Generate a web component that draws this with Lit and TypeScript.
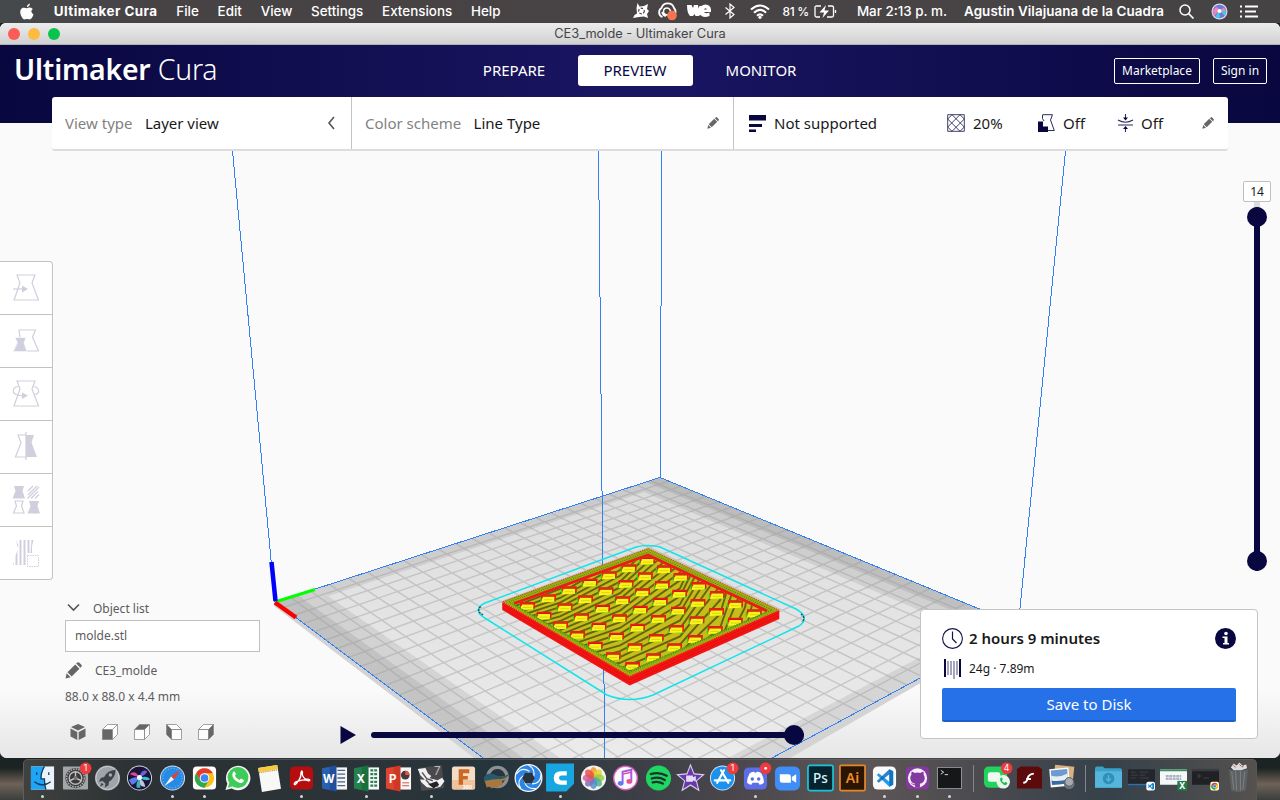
import { LitElement, html, svg, css } from "lit";
import { customElement } from "lit/decorators.js";

type Pt = [number, number];

/* Build plate corners on screen: left, back, right, front */
const PLATE: Pt[] = [[275, 602], [660, 477.5], [1018.3, 625], [604, 848.6]];

function projector(c: Pt[]) {
  const [[x0, y0], [x1, y1], [x2, y2], [x3, y3]] = c;
  const sx = x0 - x1 + x2 - x3, sy = y0 - y1 + y2 - y3;
  const dx1 = x1 - x2, dx2 = x3 - x2, dy1 = y1 - y2, dy2 = y3 - y2;
  const den = dx1 * dy2 - dx2 * dy1;
  const g = (sx * dy2 - dx2 * sy) / den, h = (dx1 * sy - sx * dy1) / den;
  return (u: number, v: number): Pt => {
    const w = 1 + g * u + h * v;
    return [
      ((x1 - x0 + g * x1) * u + (x3 - x0 + h * x3) * v + x0) / w,
      ((y1 - y0 + g * y1) * u + (y3 - y0 + h * y3) * v + y0) / w,
    ];
  };
}
const at = projector(PLATE);
const pts = (a: Pt[]) => a.map((p) => p[0].toFixed(1) + "," + p[1].toFixed(1)).join(" ");
const quad = (u0: number, v0: number, u1: number, v1: number) =>
  pts([at(u0, v0), at(u1, v0), at(u1, v1), at(u0, v1)]);

function gridPath(): string {
  let d = "";
  for (let k = 0; k < 23; k++) {
    const t = (7.5 + 10 * k) / 235;
    for (const [a, b] of [[at(t, 0), at(t, 1)], [at(0, t), at(1, t)]])
      d += `M${a[0].toFixed(1)} ${a[1].toFixed(1)}L${b[0].toFixed(1)} ${b[1].toFixed(1)}`;
  }
  return d;
}

/* Skin lines on the floor of the part, fanning out to the right */
function skinPath(): string {
  const xs = [505, 560, 620, 680, 720, 745, 768];
  const ps = [3.6, 4.6, 5.8, 8, 14, 26, 50];
  const n = [0, 4.6, 9.9, 15.7, 20.7, 24.1, 26.4];
  let d = "";
  for (let k = -16; k < 46; k++)
    d += "M" + xs.map((x, i) => `${x} ${(610 + (k - n[i]) * ps[i]).toFixed(1)}`).join("L");
  return d;
}

/* Centres of the raised blocks */
const BLOCKS: number[][] = [
  [262, 228, 325, 205, 387, 181, 449, 158, 507, 136, 566, 115, 622, 92],
  [311, 257, 374, 232, 436, 208, 497, 184, 557, 162, 615, 139, 672, 118],
  [361, 286, 424, 262, 487, 236, 547, 211, 607, 187, 666, 165, 722, 141],
  [412, 315, 476, 290, 538, 265, 600, 239, 660, 215, 718, 191, 776, 168],
  [465, 347, 529, 320, 592, 293, 655, 267, 714, 242, 773, 219, 831, 195],
  [519, 379, 584, 352, 648, 324, 709, 297, 770, 271, 829, 246, 886, 223],
  [577, 408, 640, 382, 703, 352, 765, 327, 825, 300, 885, 275, 942, 250],
];
const blocks = BLOCKS.flatMap((r) =>
  Array.from({ length: 7 }, (_, i): Pt => [440 + r[2 * i] / 3, 530 + r[2 * i + 1] / 3]));

const toolIcons = [
  svg`<path d="M17 12H35L32 20 38.500 37H14L20 20Z"/><path d="M13 26h10"/><path class="f" d="M22 22.500l6 3.500-6 3.500z"/>`,
  svg`<path d="M19 14H35.500L32.500 21 38.500 35H14L20 22Z"/><path class="f w" d="M15 21.500H26L24 27 27 35.500H13.500L17.500 27Z"/>`,
  svg`<path d="M17 12H35L32 20 38.500 37H14L20 20Z"/><path d="M18 17.500c-6 1-6.500 7-.5 8.500l6 .8M33.500 17.500c7 1.500 6.500 7.500.5 8"/><path class="f" d="M22 23.500l6 3-6 3.500z"/>`,
  svg`<path d="M26 13H18L21 20.500 15.500 35H26"/><path class="f" d="M26 13H34L31.500 20.500 37 35H26Z"/><path d="M26 10v28"/>`,
  svg`<path class="f" d="M14 11H24L22.500 16 25 23.500H12.500L15.500 16ZM29 26H39L37.500 31 40 38.500H27.500L30.500 31Z"/><path d="M15 26H23L21.500 31 24 38H13.500L16.500 31Z"/><path stroke-width="1.300" d="M28 16l5-5M28 20l9-9M27.500 23.500L39 12M31 23.500l7-7M35 23.500l4-4"/>`,
  svg`<path class="f" d="M16 12l2.500 6-1 1zM19.500 12h2v25H19.500zM23.500 12h2v25H23.500zM27.500 12h2v13H27.500zM31.500 12h2l-1.500 6v7h-1.500zM17.500 22v15h-2v-9zM13 36l1-2v3z"/><path stroke-width="1" stroke-dasharray="1.500 1" d="M27.500 27.500H38.500V38.500H27.500Z"/>`,
];

const pencil = (s: number) => html`<svg class="pencil" width=${s} height=${s} viewBox="0 0 16 16"><path d="M.5 15.500l1-5 3.800 3.800zM2.300 9.600L9.600 2.300l4 4-7.300 7.300zM10.500 1.500l1-1q1-.8 2 .1l1.900 1.900q.9 1 .1 2l-1 1z"/></svg>`;

const badge = (t: string) => svg`<circle cx="24.500" cy="4" r="6" fill="#ee3b3f"/><text x="24.500" y="7.200" font-size="9" fill="#fff" text-anchor="middle">${t}</text>`;
const wheel = (cols: string[], n: number) =>
  Array.from({ length: n }, (_, i) => svg`<ellipse cx="14" cy="8.300" rx="3.800" ry="5.600" fill=${cols[i]} opacity=".85" transform=${`rotate(${(i * 360) / n} 14 14)`}/>`);
const office = (c1: string, c2: string, t: string, lines: unknown) => svg`
  <path d="M14 3H27V26H14Z" fill="#f6f6f6"/>${lines}
  <path d="M1 4L16 1V28L1 25Z" fill=${c1}/><path d="M9 2.500L16 1V28L9 26.600Z" fill=${c2} opacity=".45"/>
  <text x="8" y="19" font-size="12" font-weight="700" fill="#fff" text-anchor="middle">${t}</text>`;
const chrome = (x: number, y: number, r: number) => svg`<g transform=${`translate(${x} ${y}) scale(${r / 10})`}>
  <circle r="10" fill="#fbc116"/><path d="M-8.700-5A10 10 0 0 1 8.700-5H0L-4.400 2.500Z" fill="#e33b2e"/>
  <path d="M-8.700-5A10 10 0 0 0 0 10L4.400 2.500H-4.400Z" fill="#2da94f"/><circle r="5" fill="#fff"/><circle r="4" fill="#4285f4"/></g>`;
const code = (x: number, y: number, s: number) => svg`<g transform=${`translate(${x} ${y}) scale(${s})`}>
  <path d="M5-9L9-7V7L5 9-8-3-6-5 5 4Z" fill="#1f9cf0"/><path d="M5-9L-8 3-6 5 5-4V9L9 7V-7Z" fill="#0b6fb8" opacity=".85"/></g>`;

interface App { art: unknown; run?: boolean }
const apps: App[] = [
  { run: true, art: svg`<path d="M2 2H26V26H2Z" fill="#e9f1fa"/><path d="M2 2H16Q12 9 13 15H16Q16 21 17.500 26H2Z" fill="#1ea5f5"/><path d="M8 8v3M20.500 8v3M5.500 18q8.500 6.500 17 0M16 2Q12 9 12.500 15H16Q16 21 17.500 26" fill="none" stroke="#12385e" stroke-width="1.300"/>` },
  { art: svg`<rect x="1" y="2" width="26" height="24" rx="1" fill="#a2a5aa"/><circle cx="14" cy="14" r="10.500" fill="#39393b"/><circle cx="14" cy="14" r="9.200" fill="none" stroke="#aaa" stroke-width="1.600" stroke-dasharray="1.700 1"/><circle cx="14" cy="14" r="6.500" fill="none" stroke="#b9b9b9" stroke-width="1.500"/><path d="M14 14V7M14 14l6.500 3M14 14l-6.500 3" stroke="#c5c5c5" stroke-width="1.500"/><circle cx="14" cy="14" r="2.200" fill="#777"/>${badge("1")}` },
  { art: svg`<circle cx="14" cy="14" r="13" fill="#9ea5aa"/><circle cx="14" cy="14" r="12" fill="none" stroke="#c8cdd0"/><path d="M22.500 5.500Q14 6 10.500 13L7 14l-2 4 4-1 3 3-1 4 4-2.500.5-3.500Q22 14 22.500 5.500ZM8 19l-2 4 4-2Z" fill="#3f4347"/><circle cx="17" cy="11" r="1.800" fill="#a7acb0"/>` },
  { art: svg`<circle cx="14" cy="14" r="13" fill="#d3d3dc"/><circle cx="14" cy="14" r="12" fill="#1c1438"/><path d="M4 10Q9 5 14 13 9 12 4 10Z" fill="#e0449a"/><path d="M14 13Q16 4 22 7 21 11 14 13Z" fill="#6f5ee0"/><path d="M3 16Q8 12 14 14 9 21 6 21Z" fill="#5a7fe6"/><path d="M14 14Q21 11 25 15 22 18 14 14Z" fill="#35c3cf"/><path d="M14 14Q19 17 20 23 13 24 14 14Z" fill="#e7f6ff" opacity=".8"/><path d="M14 14Q10 19 11 24L15 24Z" fill="#3bb3c4"/><circle cx="14" cy="13.500" r="2.600" fill="#f3fdff"/>` },
  { run: true, art: svg`<circle cx="14" cy="14" r="13" fill="#d9dde2"/><circle cx="14" cy="14" r="12" fill="#278be3"/><circle cx="14" cy="14" r="10" fill="none" stroke="#8cc9f7" stroke-dasharray="1 2"/><path d="M22.500 5.500L15.500 15.500 12.500 12.500Z" fill="#f13b32"/><path d="M5.500 22.500L12.500 12.500 15.500 15.500Z" fill="#f3f3f3"/>` },
  { run: true, art: svg`<rect x="2" y="2" width="24" height="24" rx="4" fill="#fff"/>${chrome(14, 14, 10)}` },
  { art: svg`<path d="M1.500 26.500L3.500 20A12.700 12.700 0 1 1 8 24.800Z" fill="#f4f4f4"/><circle cx="14.500" cy="13.500" r="10.800" fill="#3fcb58"/><path d="M4 24l1.500-5 3.500 3.500z" fill="#3fcb58"/><path d="M9 8.500c1-1.700 2-1.500 2.800 0s.5 2.100-.5 3.200q1.500 3 4.600 4.400c1.500-1.800 1.800-1.700 3.500-.7s1.500 1.500.4 2.800C17 21.500 6.500 15 9 8.500Z" fill="#fff"/>` },
  { art: svg`<g transform="rotate(-9 14 14)"><rect x="4" y="2" width="20" height="25" fill="#f8f8f6"/><path d="M4 2H24V6.500H4Z" fill="#f8c938"/><path d="M4 7H24" stroke="#9b8145" stroke-dasharray="1 1"/></g>` },
  { run: true, art: svg`<rect x="2" y="2" width="24" height="24" rx="4.500" fill="#b60d0e"/><path d="M6.500 20.500q-.5-2 4.500-3.500 3-5 2.500-9 1-2.500 1.500 0-1 4 3 7 4.500 0 4.500 1.300t-5.500-.3q-4 .6-6.500 1.300-3 4.500-4 3.200Z" fill="none" stroke="#fff" stroke-width="1.400"/>` },
  { art: office("#2a60b0", "#153f83", "W", svg`<path d="M17 6h8M17 10h8M17 14h8M17 18h8M17 22h8" stroke="#49638c" stroke-width="1.300"/>`) },
  { run: true, art: office("#26804b", "#0d5c31", "X", svg`<path d="M18 6h7M18 10h7M18 14h7M18 18h7M18 22h7" stroke="#2c8453" stroke-width="2.300" stroke-dasharray="3 1"/>`) },
  { art: office("#e0452f", "#b52a1c", "P", svg`<circle cx="21" cy="11" r="4.500" fill="#443b3a"/><path d="M21 11V6.500A4.500 4.500 0 0 1 25.500 11Z" fill="#e95540"/><path d="M18 19h7M18 22h7" stroke="#d65142"/>`) },
  { run: true, art: svg`<g transform="rotate(-7 14 14)"><rect x="2" y="2" width="24" height="24" fill="#4a4a4d"/><path d="M1 3l8 0 2 6 3 3-2 2 8 3 5-2 2 4-5 5-6 1-8-2-5-6-1-3 5 1-4-5Z" fill="#f0f0f0"/><path d="M5 7l4 7 6 3M8 15l4 6 8 2" stroke="#55555a" stroke-width="1.500" fill="none"/><path d="M10 20l9-2 2 4-6 3Z" fill="#232325"/></g><text x="20" y="10.500" font-size="12" fill="#bbb" text-anchor="middle">7</text>` },
  { art: svg`<rect x="2" y="2" width="24" height="24" rx="2.500" fill="#f5dcc6"/><path d="M2 16h24v8q0 2-2 2H4q-2 0-2-2Z" fill="#efc39d"/><path d="M9 5H20V9H13.500V12H18.500V15.500H13.500V21H9Z" fill="#c86a24"/><text x="18" y="25" font-size="5" fill="#fff" font-weight="700" text-anchor="middle">360</text>` },
  { art: svg`<circle cx="15" cy="13" r="10" fill="none" stroke="#8c8f93" stroke-width="3.500"/><path d="M1 15q5-7 11-4 6 4 15-1-3 6-7 7v5q-4-1-5 3-3-3-6 0-2-3-5-1Z" fill="#a5783f"/><path d="M1 13q5-6 12-2t15-2q-4 6-11 6T1 17Z" fill="#24596e"/>` },
  { art: svg`<circle cx="14" cy="14" r="14.500" fill="#f4f8fc"/><circle cx="14" cy="14" r="9.500" fill="none" stroke="#2c84e4" stroke-width="7.500"/><path d="M14 .5Q22 5 19 14M27 10Q27 20 17.500 20M22 25Q12 26 10 18M6 25Q1 17 8.500 12M1.500 10Q7 2 15 7" stroke="#f4f8fc" stroke-width="1.300" fill="none"/><path d="M10.500 8.500h7l3 5.500-3 5.500h-7L7.500 14Z" fill="#27343e"/>` },
  { run: true, art: svg`<path d="M-1-1H28V20L20 28H-1Z" fill="#17a6df"/><path d="M20.500 7H14.500Q7 7 7 14t7.500 7h6V16.500H15Q12.500 16.500 12.500 14T15 11.500h5.500Z" fill="#fff"/>` },
  { art: svg`<circle cx="14" cy="14" r="13" fill="#f4f3f0"/>${wheel(["#f19a2d", "#ead02a", "#9ccb3e", "#50b489", "#4c91cf", "#8b6bb5", "#cf609b", "#e8504a"], 8)}` },
  { art: svg`<circle cx="14" cy="14" r="13" fill="#d75fb4"/><circle cx="14" cy="14" r="11.500" fill="#fbf9ff"/><path d="M11 19V7.500l9-2V17" fill="none" stroke="#a45ae8" stroke-width="2"/><path d="M11 10l9-2" stroke="#e14f9d" stroke-width="1.500"/><ellipse cx="9" cy="19.500" rx="3" ry="2.500" fill="#5b7ff0"/><ellipse cx="18" cy="17.500" rx="3" ry="2.500" fill="#e85195"/>` },
  { art: svg`<circle cx="14" cy="14" r="13" fill="#1fd663"/><path d="M6 10q8.500-2.800 16.500 1.700M7 14.500q7-2.200 13.500 1.500M8 18.500q5.500-1.600 10.500 1.300" stroke="#17352a" stroke-width="2.400" stroke-linecap="round" fill="none"/>` },
  { art: svg`<path d="M14-1L18 9 29 10 20.700 17 23.500 28 14 22 4.500 28 7.300 17-1 10 10 9Z" fill="#d8d0e8"/><path d="M14 2L17.300 10.400 26 11.200 19.500 16.800 21.700 25.500 14 20.600 6.300 25.500 8.500 16.800 2 11.200 10.700 10.400Z" fill="#6a38ae"/><path d="M9.500 11.500h7v1.800l3-1.500v6l-3-1.500V18h-7Z" fill="#e6dcf6"/>` },
  { art: svg`<circle cx="14" cy="14" r="13" fill="#d4e5f2"/><circle cx="14" cy="14" r="12" fill="#1c91ee"/><path d="M15.500 6L8.500 19M12.500 6l7.500 13M6 16.500H22" stroke="#fff" stroke-width="2.200" stroke-linecap="round"/>${badge("1")}` },
  { run: true, art: svg`<rect x="2" y="3" width="24" height="23" rx="5" fill="#5b6ee5"/><path d="M8 9q2.500-1.500 4.500-1.500l1 1h1l1-1Q18 7.500 20 9q3 5 2.700 10-2 2-4.500 2l-1.200-2h-6L9.800 21q-2.500 0-4.500-2Q5 14 8 9Z" fill="#fff"/><circle cx="10.700" cy="15" r="1.800" fill="#5b6ee5"/><circle cx="17.300" cy="15" r="1.800" fill="#5b6ee5"/>${badge("•")}` },
  { art: svg`<rect x="1" y="2" width="26" height="25" rx="6" fill="#408df5"/><path d="M6 10h9q2.500 0 2.500 2.500V19H8.500Q6 19 6 16.500ZM18.500 13L23 10v9l-4.500-3Z" fill="#fff"/>` },
  { art: svg`<rect x="1" y="1" width="26" height="26" rx="2" fill="#06242f" stroke="#1cc3d8" stroke-width="1.800"/><text x="14" y="19" font-size="14" font-weight="500" fill="#d9f4fb" text-anchor="middle" font-family="Noto Sans">Ps</text>` },
  { art: svg`<rect x="1" y="1" width="26" height="26" rx="1" fill="#2b1604" stroke="#e6862d" stroke-width="1.800"/><text x="14" y="19.500" font-size="14.500" font-weight="600" fill="#f18b27" text-anchor="middle" font-family="Noto Sans">Ai</text>` },
  { run: true, art: svg`<rect x="2" y="2" width="24" height="24" rx="5" fill="#fbfbfb"/>${code(14, 14, 1)}` },
  { run: true, art: svg`<rect x="2" y="2" width="24" height="24" rx="5" fill="#83399e"/><circle cx="14" cy="14" r="10" fill="#f5f0f8"/><path d="M11.500 24v-4q-5-1-5-6 0-2 1.200-3.500-.4-2 .3-3 1.500 0 3 1.200 3-.7 6 0 1.500-1.200 3-1.200.7 1 .3 3Q21.500 12 21.500 14q0 5-5 6v4Z" fill="#83399e"/><path d="M12 21q-3 .8-4.500-2" stroke="#83399e" fill="none"/>` },
  { run: true, art: svg`<rect x="1" y="2.500" width="26" height="23" rx="1" fill="#9a9a9a"/><rect x="2" y="3.500" width="24" height="21" fill="#161718"/><path d="M5 6l3 2-3 2M9 10.500h3.500" stroke="#ddd" fill="none"/>` },
];
const recents: App[] = [
  { art: svg`<rect x="1" y="2" width="24" height="22" rx="5" fill="#20d35c"/><rect x="5" y="8" width="13" height="10" rx="2.500" fill="#eefaf0"/><circle cx="21" cy="18" r="7" fill="#e9f6ec"/><path transform="translate(21.500 18) scale(.9)" d="M-4-4c1-1.500 2-1 2.500.3s.2 1.500-.7 2.300q1 1.800 3 2.600c1-1 1.200-1.200 2.500-.4s1 1.500-.3 2.500Q1 5-2.500 1-5-2-4-4Z" fill="#1eb751"/>${badge("4")}` },
  { art: svg`<path d="M1 5l4-3H23l4 3V25H1Z" fill="#5c0a0c"/><path d="M4 18q3.500 0 4.500-4.500T15 8.500M7 14h5" transform="translate(3.500 1)" fill="none" stroke="#fff" stroke-width="2"/>` },
  { art: svg`<rect x="6" y="1" width="20" height="17" fill="#d9b184" transform="rotate(6 14 14)"/><rect x="2" y="4" width="20" height="19" fill="#fbfbfb" transform="rotate(-5 12 13)"/><g transform="rotate(-5 12 13)"><rect x="3.500" y="5.500" width="17" height="15" fill="#6c9bd2"/><path d="M3.500 11q8 3 17-1v10.500h-17Z" fill="#e7eef2"/><path d="M3.500 16q9 2 17 0v4.500h-17Z" fill="#3a6ba0"/></g><circle cx="22" cy="20" r="5.500" fill="#70757b"/><circle cx="22" cy="18" r="4.500" fill="#a6abb0" stroke="#5a5e62"/>` },
];
const stacks: App[] = [
  { art: svg`<path d="M0 4q0-2 2-2h6l2 2H26q2 0 2 2V24H0Z" fill="#3aa0ca"/><path d="M0 7H28V24H0Z" fill="#55b5da"/><circle cx="14" cy="14.500" r="6" fill="#2f8fb8"/><path d="M14 11v6m-2.500-2.500L14 17l2.500-2.500" stroke="#55b5da" stroke-width="1.500" fill="none"/>` },
  { art: svg`<rect x="0" y="5" width="28" height="16" fill="#23262b"/><path d="M3 8h5M3 11h7M3 14h5M12 8h9M12 11h6M12 14h10" stroke="#3f434a"/><path d="M0 20h28v1.500H0z" fill="#2472b8"/><rect x="19" y="18" width="9" height="9" rx="2" fill="#fff"/>${code(23.500, 22.500, 0.38)}` },
  { art: svg`<rect x="0" y="5" width="28" height="16" fill="#f6f8f7"/><path d="M0 5h28v2H0z" fill="#3b8d61"/><path d="M6 12h16M6 15h16" stroke="#a9b4c5" stroke-width="2.300" stroke-dasharray="3 .6"/><rect x="18" y="17" width="10" height="10" fill="#237a47"/><text x="23" y="25.500" font-size="9" font-weight="700" fill="#fff" text-anchor="middle">X</text>` },
  { art: svg`<rect x="0" y="5" width="28" height="16" fill="#202124"/><path d="M0 5h28v1.500H0zM6 10l3 2-3 2M12 14h6" fill="#35373c" stroke="#3d4045"/><rect x="19" y="18" width="9" height="9" rx="2" fill="#fff"/>${chrome(23.500, 22.500, 3.6)}` },
  { art: svg`<path d="M4 4H24L21.500 27Q14 30 6.500 27Z" fill="#5e6163"/><path d="M7 7l2 19M11 7l1 20M16 7v20M20.500 7l-2 19" stroke="#8d9092" opacity=".7"/><ellipse cx="14" cy="4" rx="10" ry="2.500" fill="#3e4244"/><path d="M6 3l3-4 3 2 3-3 3 3 4-1 1 4-6 2-8 0Z" fill="#dadcdd"/><path d="M9 1l2 2M15 0l2 2M19 1l-1 2" stroke="#b2443e"/>` },
];

@customElement("app-root")
export class AppRoot extends LitElement {
  static styles = css`
    :host { display: block; width: 1280px; height: 800px; overflow: hidden; background: linear-gradient(90deg, #23292600 2%, #273038 10%, #4c4c4b 90%, #4b4a4800 98%), linear-gradient(#1b2422 96%, #6f6259 98%, #3a3f3c); font-family: "Noto Sans", sans-serif; }
    * { box-sizing: border-box; }
    svg { display: block; overflow: visible; flex: none; }
    span { white-space: nowrap; }
    .menubar { height: 23px; display: flex; align-items: center; background: linear-gradient(90deg, #45494b, #474345 12%, #484446 70%, #454344); color: #fff; font: 500 13.400px Inter, sans-serif; padding: 0 22px 1px 20px; gap: 18.800px; }
    .menubar .app { font-weight: 700; margin-left: 1px; letter-spacing: .44px; }
    .menubar .status { margin-left: auto; display: flex; align-items: center; }
    .m8 { margin-right: 8px; } .m10 { margin-right: 10px; } .m12 { margin-right: 12px; } .m14 { margin-right: 14px; }
    .m15 { margin-right: 15px; } .m17 { margin-right: 17px; } .m20 { margin-right: 20px; }
    .pct { font-size: 12px; letter-spacing: -.3px; margin-right: 5px; }
    .user { font-weight: 600; letter-spacing: .08px; margin-right: 15px; }
    .window { height: 735px; border-radius: 6px 6px 7px 7px; overflow: hidden; background: #fafafa; }
    .titlebar { height: 22px; display: flex; align-items: center; padding: 0 8px; background: linear-gradient(#ececec, #d1d1d1); border-bottom: 1px solid #b2b2b2; font: 400 12.800px Inter, sans-serif; color: #454545; }
    .lights { display: flex; gap: 8px; width: 100px; }
    .light { width: 12px; height: 12px; border-radius: 50%; }
    .r { background: #fc5b57; } .y { background: #fdbc40; } .g { background: #0ac44f; }
    .titlebar .t { flex: 1; text-align: center; padding-right: 100px; }
    .body { position: relative; height: 713px; display: flex; flex-direction: column; }
    .scene { position: absolute; inset: 0; }
    .head { position: relative; height: 78px; padding: 0 13px 26px 14px; display: grid; grid-template-columns: 1fr auto 1fr; align-items: center; background: linear-gradient(90deg, #08073f, #191561 48%, #191561 52%, #08073f); color: #fff; }
    .logo { font-size: 28.400px; font-weight: 600; line-height: 48px; letter-spacing: -.2px; padding-bottom: 4px; }
    .logo i { font-style: normal; font-weight: 300; }
    .tabs { display: flex; align-items: center; font-size: 15px; margin-left: -6px; padding-bottom: 1px; }
    .tab { width: 115px; height: 31px; line-height: 31px; text-align: center; border-radius: 3px; }
    .tab.mid { background: #fff; color: #08073f; margin: 0 11px 0 6px; }
    .acts { display: flex; justify-content: flex-end; gap: 13px; padding-bottom: 1px; }
    .act { border: 1px solid #fff; border-radius: 2px; font-size: 12px; height: 26px; line-height: 24px; width: 54px; text-align: center; }
    .act.wide { width: 86px; }
    .bar { position: relative; margin: -26px 52px 0; height: 54px; display: flex; border-radius: 3px; background: #fff; border-bottom: 2px solid #dcdcdc; font-size: 15px; color: #191919; }
    .cell { display: flex; align-items: center; padding: 0 14px 0 13px; border-left: 1px solid #c4c4c4; }
    .cell:first-child { border: 0; padding-right: 15px; }
    .c1 { width: 299px; } .c2 { width: 382px; } .c3 { width: 495px; }
    .dim { color: #828282; margin-right: 12.400px; }
    .lead { margin: 0 7px 0 2px; }
    .quality { width: 173px; } .infill { width: 65px; } .support { width: 55px; }
    .push { margin-left: auto; }
    .pencil { fill: #666; }
    .work { position: relative; flex: 1; display: grid; grid-template-columns: 340px 1fr 360px; }
    .left { display: flex; flex-direction: column; }
    .tools { margin-top: 110px; width: 53px; height: 319px; border: 1px solid #c2c2c2; border-left: 0; border-radius: 0 4px 4px 0; background: #fff; }
    .tool { height: 53px; border-bottom: 1px solid #c2c2c2; padding-top: 1px; }
    .tool:last-child { border: 0; }
    .tool svg { fill: none; stroke: #d0cfdd; stroke-width: 1.200; }
    .tool .f { fill: #d0cfdd; stroke: none; }
    .tool .w { stroke: #fff; stroke-width: .6; }
    .objects { padding: 19px 0 0 65px; font-size: 12px; color: #5c5c5c; }
    .row { display: flex; align-items: center; }
    .olist { height: 21px; gap: 12px; padding-bottom: 3px; }
    .file { width: 195px; height: 32px; border: 1px solid #c0c0c0; background: #fff; line-height: 30px; padding-left: 9px; }
    .name { height: 37px; gap: 13px; }
    .dims { line-height: 16px; }
    .cubes { display: flex; gap: 16px; margin: 19px 0 0 5px; }
    .cubes svg { stroke: #8a8a8a; stroke-width: .8; fill: #fdfdfd; }
    .cubes .k { fill: #666; }
    .center { display: flex; align-items: flex-end; padding-bottom: 13px; }
    .path { display: flex; align-items: center; height: 20px; }
    .track { width: 432.500px; height: 6px; border-radius: 3px; background: #08073f; margin-left: 15px; display: flex; align-items: center; justify-content: flex-end; }
    .knob { width: 20px; height: 20px; border-radius: 50%; background: #08073f; flex: none; }
    .right { display: flex; flex-direction: column; }
    .layers { align-self: flex-end; width: 28px; height: 391px; margin: 30px 9px 0 0; display: flex; flex-direction: column; align-items: center; }
    .num { width: 28px; height: 21px; background: #fff; border: 1px solid #c0c0c0; border-radius: 2px; font-size: 12px; line-height: 19px; text-align: center; color: #191919; }
    .stem { width: 6px; height: 6px; background: #dcdcdc; }
    .rail { width: 6px; height: 363.500px; background: #08073f; display: flex; flex-direction: column; align-items: center; justify-content: space-between; border-radius: 9px; margin-top: -1px; }
    .card { margin: 37px 22px 0 0; width: 338px; height: 130px; background: #fff; border: 1px solid #c4c4c4; border-radius: 4px; padding: 17px 21px; color: #191919; }
    .time { height: 23px; font-size: 15px; font-weight: 600; gap: 6px; }
    .time span { padding-bottom: 2px; }
    .mat { height: 38px; font-size: 12px; gap: 7px; padding: 0 0 1px 1px; }
    .save { height: 34px; border-radius: 2px; background: #2670e8; border-bottom: 2px solid #1d5fc9; color: #fff; font-size: 15px; line-height: 33px; text-align: center; }
    .dock { margin: 1px 23px 0 23px; height: 41px; display: flex; padding: 4px 1px 0 2.500px; border: 1px solid #6a6a6a88; border-bottom: 0; border-radius: 5px 5px 0 0; background: linear-gradient(90deg, #40413f, #2b3134 9%, #2b3439 30%, #25343c 38%, #4b474c 58%, #5d5656 68%, #4a4a4f 78%, #35414a 88%, #55514f); font-family: Inter, sans-serif; }
    .icon { width: 32.400px; flex: none; display: flex; flex-direction: column; align-items: center; }
    .icon svg { width: 27px; height: 28px; }
    .dot { width: 3px; height: 3px; border-radius: 50%; background: #d6d6d6; margin-top: 3px; }
    .sep { width: 14.800px; flex: none; padding: 1px 6.500px 0 7.500px; }
    .sep::before { content: ""; display: block; width: 1px; height: 27px; background: #87858a; }
  `;

  private scene() {
    const [L, B, R] = PLATE;
    const floor = "514,604.500 648,556.500 766,612 630,671";
    return html`<svg class="scene" width="1280" height="713" viewBox="0 45 1280 713">
      <defs>
        <linearGradient id="fade" x2="0" y2="1"><stop offset="0" stop-color="#e6e6e6" stop-opacity="0"/><stop offset="1" stop-color="#e6e6e6"/></linearGradient>
        <linearGradient id="plate" x2="0" y2="1"><stop offset="0" stop-color="#dcdcdc"/><stop offset=".75" stop-color="#ebebeb"/></linearGradient>
        <clipPath id="fl"><polygon points=${floor}/></clipPath>
      </defs>
      <rect x="0" y="690" width="1280" height="68" fill="url(#fade)"/>
      <polygon fill="#d3d3d3" points="274,602 660,482 1018,627 604,865 473,757 274,606"/>
      <polygon fill="url(#plate)" points=${pts(PLATE)}/>
      <g fill="#000" fill-opacity=".08">
        <polygon points=${quad(0, 0, 0.09, 1)}/><polygon points=${quad(0, 0, 0.047, 1)}/>
        <polygon points=${quad(0.91, 0, 1, 1)}/><polygon points=${quad(0.955, 0, 1, 1)}/>
        <polygon points=${quad(0.09, 0, 0.91, 0.045)}/><polygon points=${quad(0.09, 0.955, 0.91, 1)}/>
      </g>
      <path d=${gridPath()} stroke="#9c9c9c" stroke-opacity=".42" stroke-width="1.400"/>
      <g stroke="#3380f2" stroke-width="1" fill="none">
        <polygon points=${pts(PLATE)} shape-rendering="crispEdges"/>
        <path shape-rendering="crispEdges" d="M232.500 151L${L[0]} ${L[1]}M661.500 151L660.500 ${B[1]}M1065.500 151L${R[0]} ${R[1]}M598.500 151L604.800 760"/>
      </g>
      <path d="M275 602L315 589.500" stroke="#00ff00" stroke-width="3"/>
      <path d="M271.500 562L275.500 601" stroke="#0000fb" stroke-width="4.500"/>
      <path d="M275 602.500L296 617.500" stroke="#fb0000" stroke-width="4.500"/>
      <path d="M636 547Q648 544 660 547L796 609Q811 617.500 799 626L653 695Q630 704 607 695L484 617.500Q472 609.500 485 603Z" fill="none" stroke="#10e4ea" stroke-width="1.500"/>
      <path d="M483 615l-4-3q-1-3 2-6M801 614q5 4 1 8" stroke="#0b5256" fill="none" stroke-width="1.300" stroke-dasharray="2 1"/>
      <polygon fill="#f41414" points="502.300,601.700 629.700,675 779.300,610 779.300,619 629.700,685.500 502.300,610"/>
      <path d="M502 604.500L629.700 679.500 779 613M502 607.500L629.700 682.500 779 616" stroke="#d90f0f" stroke-width=".7" fill="none"/>
      <polygon fill="#b5ae12" points="502.300,601.700 648.300,548.300 779.300,610 629.700,676.500"/>
      <g fill="none" stroke-width="1" stroke-dasharray="1 1">
        <polygon stroke="#e02a10" points="503,601.700 648.300,548.600 778.500,610 629.700,676"/>
        <polygon stroke="#22c51a" points="506,601.700 648.300,550 775,610 629.700,674"/>
        <polygon stroke="#5f6a08" points="509,602 648.300,551.800 772,610 629.700,672.500"/>
        <polygon stroke="#22c51a" points="512,602.500 648.300,553 769,610 629.700,671.500"/>
      </g>
      <g clip-path="url(#fl)">
        <polygon fill="#c4bd1a" points=${floor}/>
        <path d=${skinPath()} fill="none" stroke="#4e4c0a" stroke-width="1.900" stroke-opacity=".8"/>
        ${blocks.map(([x, y]) => svg`<g transform=${`translate(${x.toFixed(1)} ${y.toFixed(1)}) scale(1.08)`}>
          <path d="M-7.500 3.500V-1L-5-3.500H7V3.500Z" fill="#2fd01d"/>
          <path d="M-6.500 2.500V-2.500H6.500V2.500Z" fill="#c51810"/>
          <path d="M-6.500 3.800L-5.500-1.500H6L5.500 3.300Z" fill="#fdf41a"/>
          <path d="M-5.800 0V-3H6.500V2" fill="none" stroke="#f01a12" stroke-width="1.300"/>
          <path d="M-4 1.300h8" stroke="#d0c80e" stroke-width=".7"/>
        </g>`)}
      </g>
      <path d="M514 603.500L648 555 767 611" fill="none" stroke="#f01818" stroke-width="2.800"/>
      <path d="M514 604.500L629.700 671 767 612" fill="none" stroke="#36a814" stroke-width="1" stroke-dasharray="2 1"/>
    </svg>`;
  }

  private status() {
    return html`<div class="status">
      <svg class="m8" width="16" height="16" viewBox="0 0 16 16"><path d="M4.500 0l2 3.500L11 3l4-2-1 5 2 2-2 3 1 4-4-1.500-5 .5L0 15l1.500-3L4 10.500 3.500 5Z" fill="#fff"/><circle cx="8.500" cy="8" r="2.800" fill="none" stroke="#474345" stroke-width="1.200" stroke-dasharray="2.500 1.500"/></svg>
      <svg class="m10" width="20" height="17" viewBox="0 0 20 17"><path d="M5.500 14A5 5 0 0 1 4.500 5 6.500 6.500 0 0 1 17 5q2 2 1.500 5" fill="none" stroke="#fff" stroke-width="1.800"/><path d="M11 12q-4.500 0-4.500-3.500T10 5q2.500 0 3.500 3T17 9M5 9q1 4 4 4" fill="none" stroke="#fff" stroke-width="1.500"/><circle cx="15" cy="12.500" r="4.800" fill="#fb7452"/></svg>
      <svg class="m14" width="24" height="14" viewBox="0 0 24 14"><path d="M0 1h4.500l1.500 3 1-3h4l.5 3.500L12.500 2h2Q16 .5 18.500.5q5 .5 5.500 5V8H17q1 2 5.500.5V12q-6 2.500-9-1L11.500 12H8.500L7.500 10 6 12H3Q0 9 0 1ZM17 5.500h3q-1.500-2.500-3 0Z" fill="#fff"/></svg>
      <svg class="m15" width="10" height="16" viewBox="0 0 10 16"><path d="M.5 4.500l8.500 7L5 15V1l4 3.500-8.500 7" fill="none" stroke="#fff" stroke-width="1.200"/></svg>
      <svg class="m12" width="20" height="15" viewBox="0 0 20 15"><path d="M1 5.500Q10-2.500 19 5.500M4 8.700Q10 3 16 8.700M7 11.700Q10 9 13 11.700" fill="none" stroke="#fff" stroke-width="2.100"/><circle cx="10" cy="13.300" r="1.600" fill="#fff"/></svg>
      <span class="pct">81 %</span>
      <svg class="m20" width="23" height="13" viewBox="0 0 23 13"><path d="M7 1H2.500Q1 1 1 2.500v8Q1 12 2.500 12H6M14 1h4q1.500 0 1.500 1.500v8q0 1.500-1.500 1.500h-5M21.500 5v3" fill="none" stroke="#fff" stroke-width="1.300"/><path d="M12 0L5.500 7.500H10L8.500 13 15 5.500H10.500Z" fill="#fff"/></svg>
      <span class="m17">Mar 2:13 p. m.</span>
      <span class="user">Agustin Vilajuana de la Cuadra</span>
      <svg class="m17" width="15" height="15" viewBox="0 0 15 15"><circle cx="6" cy="6" r="5" fill="none" stroke="#fff" stroke-width="1.500"/><path d="M9.500 9.500l5 5" stroke="#fff" stroke-width="1.700"/></svg>
      <svg class="m12" width="17" height="17" viewBox="0 0 17 17"><circle cx="8.500" cy="8.500" r="8" fill="#d9d9ee"/><circle cx="8.500" cy="8.500" r="6.800" fill="#6e78d8"/><path d="M2 7q5-6 6 1l-5 5zM9 8q4-6 6 0l-3 1z" fill="#f184b4"/><path d="M8 8l-4 6q4 2 5 0zM9 8l5 5q2-3 1-5z" fill="#46c9e4"/><circle cx="8.500" cy="8" r="2" fill="#fff"/></svg>
      <svg width="18" height="13" viewBox="0 0 18 13"><path d="M0 1.500h2M0 6.500h2M0 11.500h2M5 1.500h13M5 6.500h11M5 11.500h13" stroke="#fff" stroke-width="1.800"/></svg>
    </div>`;
  }

  private icon = (a: App) => html`<div class="icon"><svg viewBox="0 0 28 28">${a.art}</svg>${a.run ? html`<div class="dot"></div>` : ""}</div>`;

  render() {
    return html`
      <div class="menubar">
        <svg width="14" height="17" viewBox="0 0 14 17"><path d="M9.800.5Q10 3 7 4.300 6.700 1.800 9.800.5ZM7 5.200q3-1.700 5.800.8-3.300 2.200.7 5.500Q11.500 17 9 16.300q-2-.8-4 0Q3 17 1 12.500-1.300 6.500 3 4.800q1.500-.4 4 .4Z" fill="#fff"/></svg>
        <span class="app">Ultimaker Cura</span><span>File</span><span>Edit</span><span>View</span><span>Settings</span><span>Extensions</span><span>Help</span>
        ${this.status()}
      </div>
      <div class="window">
        <div class="titlebar"><div class="lights"><div class="light r"></div><div class="light y"></div><div class="light g"></div></div><span class="t">CE3_molde - Ultimaker Cura</span></div>
        <div class="body">
          ${this.scene()}
          <div class="head">
            <span class="logo">Ultimaker <i>Cura</i></span>
            <div class="tabs"><span class="tab">PREPARE</span><span class="tab mid">PREVIEW</span><span class="tab">MONITOR</span></div>
            <div class="acts"><span class="act wide">Marketplace</span><span class="act">Sign in</span></div>
          </div>
          <div class="bar">
            <div class="cell c1"><span class="dim">View type</span><span>Layer view</span>
              <svg class="push" width="9" height="14" viewBox="0 0 9 14"><path d="M7 1L2 7l5 6" fill="none" stroke="#555" stroke-width="1.600"/></svg></div>
            <div class="cell c2"><span class="dim">Color scheme</span><span>Line Type</span><span class="push">${pencil(12)}</span></div>
            <div class="cell c3">
              <svg class="lead" width="18" height="18" viewBox="0 0 18 18"><path d="M0 1h17v5.500H0zM0 10h13v3H0zM0 15.500h7V18H0z" fill="#08073f"/></svg><span class="quality">Not supported</span>
              <svg class="m8" width="18" height="18" viewBox="0 0 18 18"><path d="M.7.700H17.300V17.300H.7ZM.7 5L5 .7M.7 13L13 .7M5 17.300L17.300 5M13 17.300l4.300-4.300M5 .7L17.300 13M13 .7L17.300 5M.7 5L13 17.300M.7 13L5 17.300" fill="none" stroke="#2d2b5e" stroke-width=".9"/></svg><span class="infill">20%</span>
              <svg class="m8" width="17" height="18" viewBox="0 0 17 18"><path d="M4.500.7H14.500L12.500 6 16.300 16.500H8" fill="none" stroke="#2d2b5e"/><path d="M4.500 1v3.500L6 7" fill="none" stroke="#2d2b5e"/><path d="M0 7.500h5v5h5V18H0Z" fill="#08073f"/></svg><span class="support">Off</span>
              <svg class="m8" width="15" height="18" viewBox="0 0 15 18"><path d="M0 6Q7.500 10.500 15 6M0 11h15M7.500 0v4M7.500 14v4" fill="none" stroke="#2d2b5e" stroke-width="1.100"/><path d="M5 3.500h5L7.500 6.500zM5 15h5L7.500 12z" fill="#08073f"/></svg><span>Off</span>
              <span class="push">${pencil(12)}</span>
            </div>
          </div>
          <div class="work">
            <div class="left">
              <div class="tools">${toolIcons.map((t) => html`<div class="tool"><svg width="52" height="52" viewBox="0 0 52 52">${t}</svg></div>`)}</div>
              <div class="objects">
                <div class="row olist"><svg width="16" height="10" viewBox="0 0 16 10"><path d="M3 1.500l5.500 5.500L14 1.500" fill="none" stroke="#555" stroke-width="1.600"/></svg><span>Object list</span></div>
                <div class="file">molde.stl</div>
                <div class="row name">${pencil(17)}<span>CE3_molde</span></div>
                <div class="dims">88.0 x 88.0 x 4.4 mm</div>
                <div class="cubes">
                  <svg width="16" height="16" viewBox="0 0 16 16"><path class="k" stroke="none" d="M8 0l7 3-7 3.500L1 3ZM.5 4.500L7.300 8v8L.5 12.500ZM15.500 4.500L8.700 8v8l6.800-3.500Z"/></svg>
                  <svg width="16" height="16" viewBox="0 0 16 16"><path d="M.5 5.500l5-5h10v10l-5 5H.5Z"/><path d="M10.500 5.500l5-5"/><path class="k" d="M.5 5.500h10v10H.5Z"/></svg>
                  <svg width="16" height="16" viewBox="0 0 16 16"><path d="M.5 5.500h10v10H.5ZM10.500 5.500l5-5v10l-5 5Z"/><path class="k" d="M.5 5.500l5-5h10l-5 5Z"/></svg>
                  <svg width="16" height="16" viewBox="0 0 16 16"><path d="M5.500 5.500h10v10h-10ZM5.500 5.500L.5.500h10l5 5Z"/><path class="k" d="M.5.500l5 5v10l-5-5Z"/></svg>
                  <svg width="16" height="16" viewBox="0 0 16 16"><path d="M.5 5.500h10v10H.5ZM.5 5.500l5-5h10l-5 5Z"/><path class="k" d="M10.500 5.500l5-5v10l-5 5Z"/></svg>
                </div>
              </div>
            </div>
            <div class="center"><div class="path"><svg width="16" height="18" viewBox="0 0 16 18"><path d="M.5 0L16 9 .5 18Z" fill="#08073f"/></svg><div class="track"><div class="knob"></div></div></div></div>
            <div class="right">
              <div class="layers"><div class="num">14</div><div class="stem"></div><div class="rail"><div class="knob"></div><div class="knob"></div></div></div>
              <div class="card">
                <div class="row time"><svg width="21" height="21" viewBox="0 0 21 21"><circle cx="10.500" cy="10.500" r="9.900" fill="none" stroke="#14124a" stroke-width="1.100"/><path d="M10.500 3.500V11l4 4" fill="none" stroke="#14124a" stroke-width="1.200"/></svg><span>2 hours 9 minutes</span>
                  <svg class="push" width="21" height="21" viewBox="0 0 21 21"><circle cx="10.500" cy="10.500" r="10.500" fill="#08073f"/><circle cx="11" cy="5.500" r="1.800" fill="#fff"/><path d="M7.500 8.500h5v6.500h1.500v1.500H8V15h1.500v-5h-2Z" fill="#fff"/></svg></div>
                <div class="row mat"><svg width="19" height="20" viewBox="0 0 19 20"><path d="M2 0v18M17 0v18" stroke="#08073f" stroke-width="2"/><path d="M5 2v14M8 2v14M11 2v18M14 2v14" stroke="#6b6990" stroke-width="1.200"/></svg><span>24g · 7.89m</span></div>
                <div class="save">Save to Disk</div>
              </div>
            </div>
          </div>
        </div>
      </div>
      <div class="dock">${apps.map(this.icon)}<div class="sep"></div>${recents.map(this.icon)}<div class="sep"></div>${stacks.map(this.icon)}</div>
    `;
  }
}
